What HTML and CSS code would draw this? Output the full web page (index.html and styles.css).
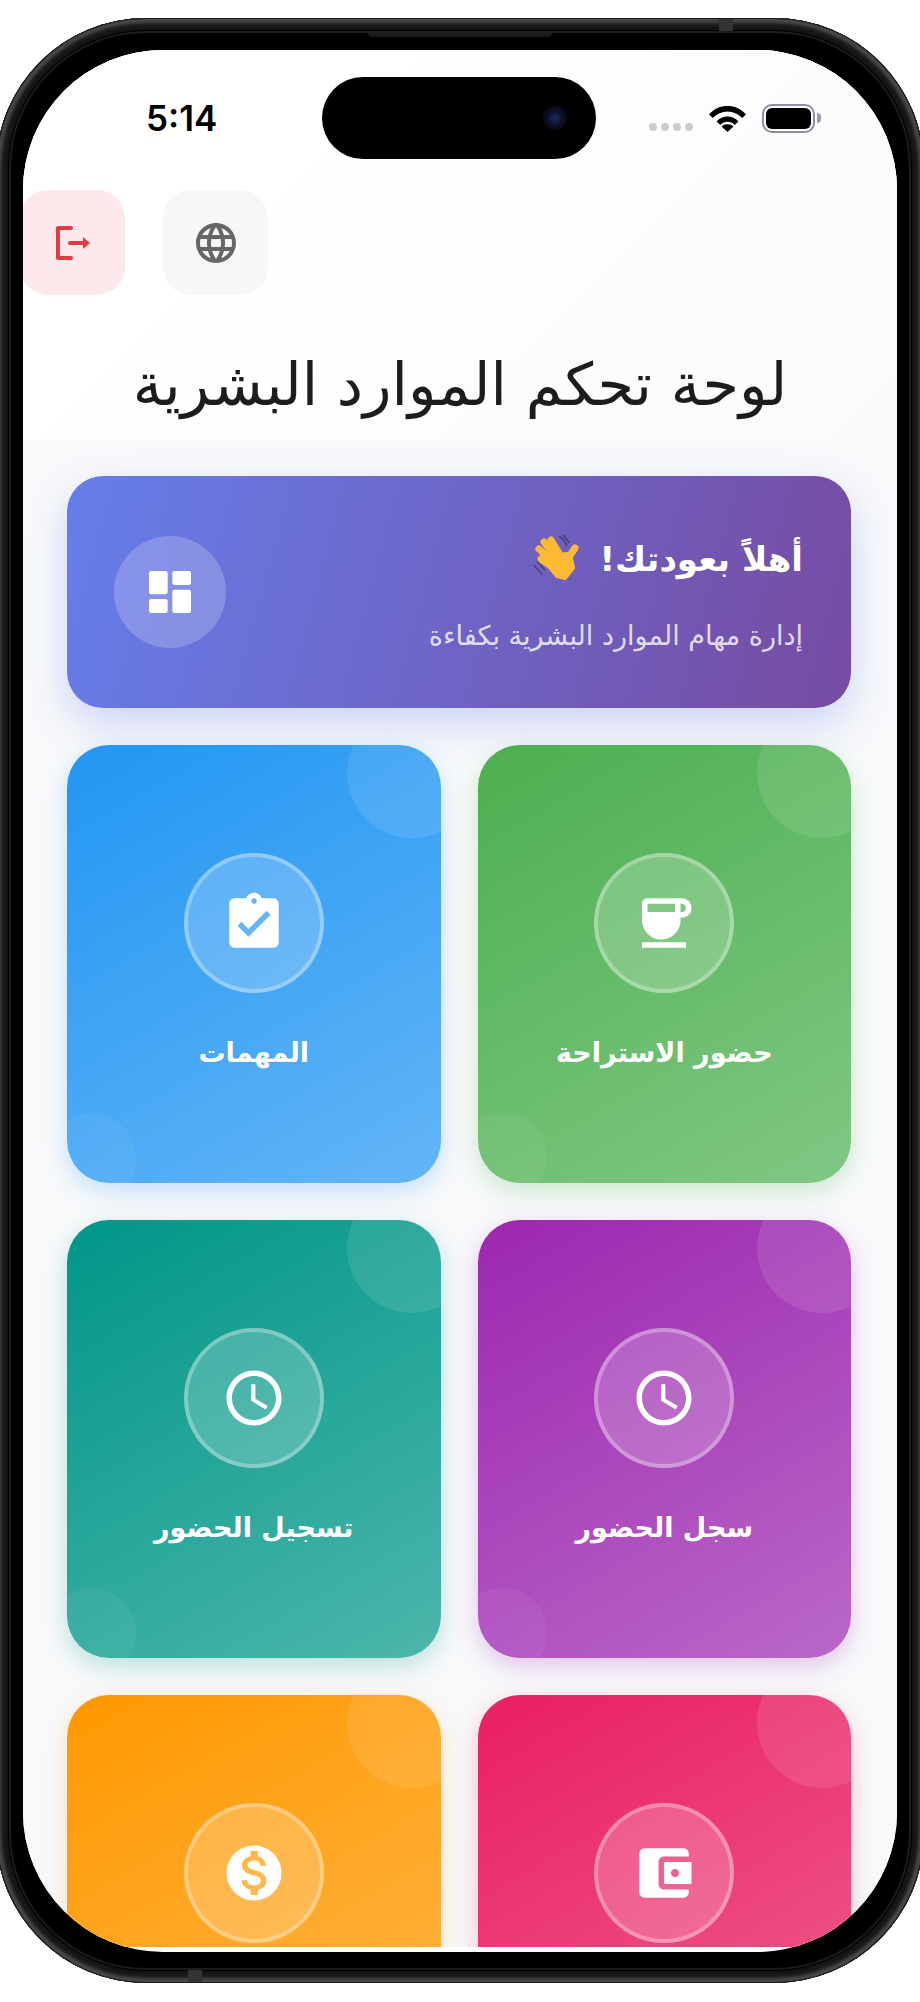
FILE: index.html
```html
<!DOCTYPE html>
<html lang="ar" dir="rtl">
<head>
    <meta charset="utf-8">
    <title>لوحة تحكم الموارد البشرية</title>
    <link rel="stylesheet" href="styles.css">
</head>
<body>

    <div class="phone">
        <span class="band band-top"></span>
        <span class="band band-bottom"></span>
        <span class="speaker"></span>

        <div class="screen">
            <div class="island"><span class="camera"></span></div>

            <div class="viewport">
                <header class="top">
                    <div class="status" dir="ltr">
                        <span class="time">5:14</span>
                        <div class="status-right">
                            <div class="signal"><i></i><i></i><i></i><i></i></div>
                            <svg class="wifi" viewBox="0 0 37 27"><path d="M0 9.500C5 3.500 11.500 1 18.500 1S32 3.500 37 9.500l-3.800 3.600C29.200 8.600 24.200 6.400 18.500 6.400S7.800 8.600 3.800 13.100z"/><path d="M7.500 16.500c3-3.200 6.800-4.900 11-4.900s8 1.700 11 4.900l-3.800 3.500c-2-2.100-4.500-3.200-7.200-3.200s-5.200 1.100-7.200 3.200z"/><path d="M12.500 21.500c1.700-1.500 3.700-2.300 6-2.300s4.300.8 6 2.300l-6 5.500z"/></svg>
                            <div class="battery"><span class="level"></span></div>
                        </div>
                    </div>

                    <div class="actions">
                        <button class="action lang" type="button">
                            <svg viewBox="0 0 24 24"><path d="M11.990 2C6.470 2 2 6.480 2 12s4.470 10 9.990 10C17.520 22 22 17.520 22 12S17.520 2 11.990 2zm6.930 6h-2.950c-.32-1.250-.78-2.450-1.380-3.560 1.840.63 3.370 1.910 4.330 3.560zM12 4.040c.83 1.200 1.480 2.530 1.910 3.960h-3.820c.43-1.430 1.080-2.760 1.910-3.960zM4.260 14C4.100 13.360 4 12.690 4 12s.1-1.360.26-2h3.380c-.08.66-.14 1.320-.14 2 0 .68.06 1.340.14 2H4.260zm.82 2h2.950c.32 1.250.78 2.450 1.380 3.560-1.840-.63-3.370-1.900-4.330-3.560zm2.950-8H5.080c.96-1.660 2.490-2.930 4.330-3.560C8.810 5.550 8.350 6.750 8.030 8zM12 19.960c-.83-1.200-1.480-2.530-1.910-3.960h3.820c-.43 1.430-1.080 2.760-1.910 3.960zM14.340 14H9.660c-.09-.66-.16-1.320-.16-2 0-.68.07-1.350.16-2h4.680c.09.65.16 1.320.16 2 0 .68-.07 1.340-.16 2zm.25 5.560c.6-1.110 1.060-2.310 1.380-3.560h2.950c-.96 1.650-2.490 2.930-4.330 3.560zM16.360 14c.08-.66.14-1.320.14-2 0-.68-.06-1.340-.14-2h3.380c.16.64.26 1.310.26 2s-.1 1.360-.26 2h-3.380z"/></svg>
                        </button>
                        <button class="action logout" type="button">
                            <svg viewBox="0 0 44 44"><path class="bracket" d="M20 7H7V37H20"/><path class="shaft" d="M19 22H33"/><path d="M32 16L39 22L32 28z"/></svg>
                        </button>
                    </div>

                    <h1 class="page-title">لوحة تحكم الموارد البشرية</h1>
                </header>

                <main class="content">
                    <section class="hero">
                        <div class="hero-text">
                            <h2>أهلاً بعودتك! <svg class="wave" viewBox="10 8 50 50"><g class="wave-fingers"><path d="M40 32L29 14"/><path d="M35 34L22 16"/><path d="M32 37L17 23"/><path d="M32 42L19 33"/><path d="M45 34L53 22"/></g><path class="wave-palm" d="M32 29L48 28L51 42L43 52L35 50L27 40z"/><path class="wave-lines" d="M37 10c3 2 6 5 8 10M41 9c2 2 4 4 6 8M12 39c2 3 5 6 8 9M15 35c2 3 5 6 8 9"/></svg></h2>
                            <p>إدارة مهام الموارد البشرية بكفاءة</p>
                        </div>
                        <div class="hero-badge">
                            <svg viewBox="0 0 24 24"><rect x="3" y="3" width="8" height="10" rx="1"/><rect x="3" y="15" width="8" height="6" rx="1"/><rect x="13" y="11" width="8" height="10" rx="1"/><rect x="13" y="3" width="8" height="6" rx="1"/></svg>
                        </div>
                    </section>

                    <section class="cards">
                        <a class="card green">
                            <span class="card-icon"><svg viewBox="0 0 24 24"><path d="M18.500 3H6C4.900 3 4 3.900 4 5v5.710c0 3.830 2.950 7.180 6.780 7.290 3.960.12 7.220-3.060 7.220-7v-1h.5c1.930 0 3.500-1.570 3.500-3.500S20.430 3 18.500 3zM16 5v3H6V5h10zm2.500 3H18V5h.5c.83 0 1.500.67 1.500 1.500S19.330 8 18.500 8zM4 19h16v2H4v-2z"/></svg></span>
                            <span class="card-label">حضور الاستراحة</span>
                        </a>
                        <a class="card blue">
                            <span class="card-icon"><svg viewBox="0 0 24 24"><path d="M19 3h-4.180C14.400 1.840 13.300 1 12 1c-1.300 0-2.400.84-2.820 2H5c-1.100 0-2 .9-2 2v14c0 1.100.9 2 2 2h14c1.100 0 2-.9 2-2V5c0-1.100-.9-2-2-2zm-7 0c.55 0 1 .45 1 1s-.45 1-1 1-1-.45-1-1 .45-1 1-1zm-2 14l-4-4 1.410-1.410L10 14.170l6.590-6.590L18 9l-8 8z"/></svg></span>
                            <span class="card-label">المهمات</span>
                        </a>
                        <a class="card purple">
                            <span class="card-icon"><svg viewBox="0 0 24 24"><path d="M11.990 2C6.470 2 2 6.480 2 12s4.470 10 9.990 10C17.520 22 22 17.520 22 12S17.520 2 11.990 2zM12 20c-4.420 0-8-3.580-8-8s3.580-8 8-8 8 3.580 8 8-3.580 8-8 8zm.5-13H11v6l5.250 3.150.75-1.230-4.500-2.670z"/></svg></span>
                            <span class="card-label">سجل الحضور</span>
                        </a>
                        <a class="card teal">
                            <span class="card-icon"><svg viewBox="0 0 24 24"><path d="M11.990 2C6.470 2 2 6.480 2 12s4.470 10 9.990 10C17.520 22 22 17.520 22 12S17.520 2 11.990 2zM12 20c-4.420 0-8-3.580-8-8s3.580-8 8-8 8 3.580 8 8-3.580 8-8 8zm.5-13H11v6l5.250 3.150.75-1.230-4.500-2.670z"/></svg></span>
                            <span class="card-label">تسجيل الحضور</span>
                        </a>
                        <a class="card pink">
                            <span class="card-icon"><svg viewBox="0 0 24 24"><path d="M21 18v1c0 1.100-.9 2-2 2H5c-1.110 0-2-.9-2-2V5c0-1.100.89-2 2-2h14c1.100 0 2 .9 2 2v1h-9c-1.110 0-2 .9-2 2v8c0 1.100.89 2 2 2h9zm-9-2h10V8H12v8zm4-2.500c-.83 0-1.500-.67-1.500-1.500s.67-1.500 1.500-1.500 1.500.67 1.500 1.500-.67 1.500-1.500 1.500z"/></svg></span>
                        </a>
                        <a class="card orange">
                            <span class="card-icon"><svg viewBox="0 0 24 24"><path d="M12 2C6.480 2 2 6.480 2 12s4.480 10 10 10 10-4.480 10-10S17.520 2 12 2zm1.410 16.090V20h-2.670v-1.930c-1.710-.36-3.160-1.460-3.270-3.400h1.960c.1 1.050.82 1.870 2.650 1.870 1.960 0 2.400-.98 2.400-1.590 0-.83-.44-1.610-2.670-2.140-2.480-.6-4.180-1.620-4.180-3.670 0-1.720 1.390-2.840 3.110-3.210V4h2.670v1.950c1.860.45 2.790 1.860 2.850 3.390H14.300c-.05-1.110-.64-1.870-2.220-1.870-1.500 0-2.400.68-2.400 1.640 0 .84.65 1.390 2.670 1.910s4.180 1.390 4.180 3.910c-.01 1.830-1.380 2.830-3.120 3.160z"/></svg></span>
                        </a>
                    </section>
                </main>
            </div>
        </div>
    </div>

</body>
</html>
```

FILE: styles.css
```css
html, body {
    margin: 0;
    height: 2002px;
    overflow: hidden;
    background: #fff;
    font-family: "DejaVu Sans", sans-serif;
}

.phone {
    position: relative;
    box-sizing: border-box;
    width: 928px;
    height: 1965px;
    margin: 18px -4px 0 0;
    padding: 32px 27px 31px;
    border-radius: 150px;
    background: #000;
    box-shadow: inset 0 0 0 1px #1a1a1a, inset 0 0 3px 5px #484848, inset 0 0 3px 9px #1c1c1c, inset 0 0 0 12px #141414, inset 0 0 0 13px #000, inset 0 0 0 15px #1c1c1c;
}

.band {
    position: absolute;
    width: 14px;
    height: 12px;
    background: #333;
}

.band-top {
    top: 1px;
    left: 723px;
}

.band-bottom {
    bottom: 1px;
    left: 192px;
}

.speaker {
    position: absolute;
    top: 14px;
    left: 371px;
    width: 186px;
    height: 5px;
    border-radius: 0 0 6px 6px;
    background: #1c1c1c;
}

.screen {
    position: relative;
    height: 1902px;
    border-radius: 140px;
    overflow: hidden;
    background: #fff;
}

.island {
    position: absolute;
    z-index: 2;
    top: 27px;
    left: 299px;
    width: 274px;
    height: 82px;
    border-radius: 41px;
    background: #000;
}

.camera {
    position: absolute;
    top: 29px;
    left: 221px;
    width: 24px;
    height: 24px;
    border-radius: 50%;
    background: radial-gradient(circle, #1c2a66 0, #0c0f26 45%, #050508 100%);
}

.viewport {
    height: 1897px;
    overflow: hidden;
    background: #f8f9fb;
}

.top {
    height: 390px;
    background: linear-gradient(135deg, #fff 30%, #fafafc 100%);
}

.status {
    box-sizing: border-box;
    display: flex;
    align-items: center;
    justify-content: space-between;
    height: 140px;
    padding: 0 82px 4px 123px;
}

.time {
    font-family: Inter, sans-serif;
    font-size: 35px;
    font-weight: 600;
    color: #000;
}

.status-right {
    display: flex;
    align-items: center;
    gap: 16px;
}

.signal {
    display: flex;
    gap: 4px;
    margin-top: 18px;
}

.signal i {
    width: 8px;
    height: 8px;
    border-radius: 50%;
    background: #ccc;
}

.wifi {
    width: 37px;
    height: 27px;
}

.battery {
    box-sizing: border-box;
    position: relative;
    width: 53px;
    height: 29px;
    padding: 2px;
    border: 2px solid #8f8fa3;
    border-radius: 10px;
}

.battery::after {
    content: "";
    position: absolute;
    top: 7px;
    left: 53px;
    width: 4px;
    height: 10px;
    border-radius: 0 5px 5px 0;
    background: #9a9aa8;
}

.level {
    display: block;
    height: 100%;
    border-radius: 6px;
    background: #000;
}

.actions {
    display: flex;
    justify-content: flex-end;
    gap: 38px;
    margin-left: -3px;
}

.action {
    display: flex;
    align-items: center;
    justify-content: center;
    width: 105px;
    height: 105px;
    padding: 0;
    border: 0;
    border-radius: 28px;
}

.action svg {
    width: 48px;
    height: 48px;
    fill: #666;
}

.lang {
    background: #f7f6f8;
}

.logout {
    background: #fde8ec;
}

.logout svg {
    width: 44px;
    height: 44px;
    fill: #e03a48;
}

.bracket,
.shaft {
    fill: none;
    stroke: #e03a48;
    stroke-linecap: round;
    stroke-linejoin: round;
}

.bracket {
    stroke-width: 4;
}

.shaft {
    stroke-width: 4;
}

.page-title {
    margin: 52px 0 0;
    font-size: 59px;
    line-height: 76px;
    font-weight: 400;
    text-align: center;
    color: #1c1c1e;
}

.content {
    padding: 36px 46px 0 44px;
}

.hero {
    box-sizing: border-box;
    display: flex;
    align-items: center;
    justify-content: space-between;
    height: 232px;
    padding: 0 48px 0 47px;
    border-radius: 36px;
    background: linear-gradient(105deg, #667eea 0%, #764ba2 100%);
    box-shadow: 0 16px 40px rgba(102, 126, 234, .3);
}

.hero-text {
    padding-top: 7px;
}

.hero-text h2 {
    display: flex;
    align-items: center;
    gap: 17px;
    margin: 0 0 37px;
    font-size: 34px;
    line-height: 44px;
    font-weight: 700;
    color: #fff;
}

.hero-text p {
    margin: 0;
    font-size: 27px;
    line-height: 36px;
    color: rgba(255, 255, 255, .8);
}

.wave {
    width: 50px;
    height: 50px;
    margin: -3px 0;
}

.wave-fingers {
    fill: none;
    stroke: #fdbb35;
    stroke-width: 7;
    stroke-linecap: round;
}

.wave-palm {
    fill: #fdbb35;
    stroke: #fdbb35;
    stroke-width: 4;
    stroke-linejoin: round;
}

.wave-lines {
    fill: none;
    stroke: #3d3a5c;
    stroke-width: 1.2;
}

.hero-badge {
    display: flex;
    align-items: center;
    justify-content: center;
    width: 112px;
    height: 112px;
    border-radius: 50%;
    background: rgba(255, 255, 255, .2);
}

.hero-badge svg {
    width: 56px;
    height: 56px;
    fill: #fff;
}

.cards {
    display: grid;
    grid-template-columns: 1fr 1fr;
    grid-auto-rows: 437.5px;
    gap: 37.5px 37px;
    margin-top: 37px;
}

.card {
    position: relative;
    overflow: hidden;
    display: flex;
    flex-direction: column;
    align-items: center;
    padding-top: 108px;
    box-sizing: border-box;
    border-radius: 42px;
}

.card::before,
.card::after {
    content: "";
    position: absolute;
    border-radius: 50%;
}

.card::before {
    top: -37px;
    right: -36px;
    width: 130px;
    height: 130px;
    background: rgba(255, 255, 255, .1);
}

.card::after {
    bottom: -20px;
    left: -21px;
    width: 90px;
    height: 90px;
    background: rgba(255, 255, 255, .05);
}

.card-icon {
    box-sizing: border-box;
    display: flex;
    align-items: center;
    justify-content: center;
    width: 140px;
    height: 140px;
    border: 4px solid rgba(255, 255, 255, .3);
    border-radius: 50%;
    background: rgba(255, 255, 255, .2);
}

.card-icon svg {
    width: 66px;
    height: 66px;
    fill: #fff;
}

.card-label {
    margin-top: 38px;
    font-size: 27px;
    line-height: 44px;
    font-weight: 700;
    color: #fff;
}

.green {
    background: linear-gradient(150deg, #4caf50, #81c784);
    box-shadow: 0 8px 24px rgba(76, 175, 80, .25);
}

.blue {
    background: linear-gradient(150deg, #2196f3, #64b5f6);
    box-shadow: 0 8px 24px rgba(33, 150, 243, .25);
}

.purple {
    background: linear-gradient(150deg, #9c27b0, #ba68c8);
    box-shadow: 0 8px 24px rgba(156, 39, 176, .25);
}

.teal {
    background: linear-gradient(150deg, #009688, #4db6ac);
    box-shadow: 0 8px 24px rgba(0, 150, 136, .25);
}

.pink {
    background: linear-gradient(150deg, #e91e63, #f06292);
    box-shadow: 0 8px 24px rgba(233, 30, 99, .25);
}

.orange {
    background: linear-gradient(150deg, #ff9800, #ffb74d);
    box-shadow: 0 8px 24px rgba(255, 152, 0, .25);
}
```
